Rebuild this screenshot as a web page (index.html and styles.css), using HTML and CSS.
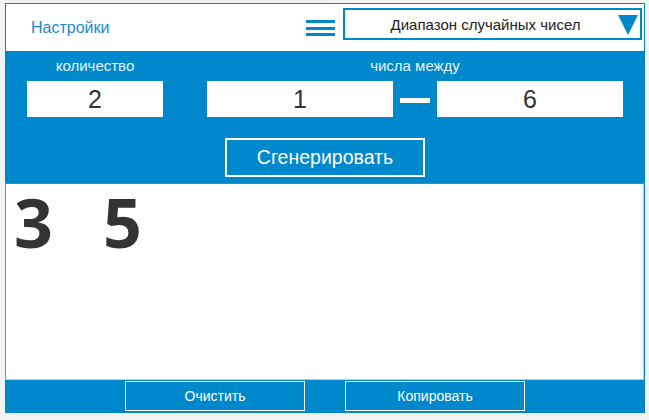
FILE: index.html
```html
<!DOCTYPE html>
<html lang="ru">

<head>
  <meta charset="UTF-8">
  <title>Генератор случайных чисел</title>
  <link rel="stylesheet" href="styles.css">
</head>

<body>
  <div class="app">
    <!-- Header -->
    <header class="top-bar">
      <a class="settings-link" href="#">Настройки</a>
      <button class="menu-button" aria-label="Меню">
        <svg width="29" height="17" viewBox="0 0 29 17">
          <rect x="0" y="0" width="29" height="3" fill="#0088cc" />
          <rect x="0" y="7" width="29" height="3" fill="#0088cc" />
          <rect x="0" y="13" width="29" height="3" fill="#0088cc" />
        </svg>
      </button>
      <div class="mode-select">
        <span class="mode-text">Диапазон случайных чисел</span>
        <svg class="mode-arrow" width="20" height="20" viewBox="0 0 20 20">
          <polygon points="0,0 20,0 10,20" fill="#0088cc" />
        </svg>
      </div>
    </header>

    <!-- Controls -->
    <section class="controls">
      <div class="fields">
        <div class="field count-field">
          <label class="field-label">количество</label>
          <div class="num-box">2</div>
        </div>
        <div class="field range-field">
          <label class="field-label">числа между</label>
          <div class="range-row">
            <div class="num-box">1</div>
            <span class="dash"></span>
            <div class="num-box">6</div>
          </div>
        </div>
      </div>
      <button class="generate-button">Сгенерировать</button>
    </section>

    <!-- Result -->
    <div class="output">
      <span class="result-num">3</span>
      <span class="result-num">5</span>
    </div>

    <!-- Footer -->
    <footer class="bottom-bar">
      <button class="bar-button">Очистить</button>
      <button class="bar-button">Копировать</button>
    </footer>
  </div>
</body>

</html>
```

FILE: styles.css
```css
body {
  margin: 0;
  padding: 3px 0 0 5px;
  background-color: #f3f3f3;
  font-family: "Liberation Sans", Arial, sans-serif;
}

.app {
  width: 640px;
  background-color: #0088cc;
  box-sizing: border-box;
  padding-top: 1px;
}

/* header */
.top-bar {
  display: flex;
  align-items: center;
  height: 47px;
  margin: 0 1px;
  background-color: #fff;
}

.settings-link {
  margin-left: 25px;
  font-size: 16px;
  color: #1a8ad4;
  text-decoration: none;
}

.menu-button {
  margin-left: auto;
  margin-right: 8px;
  padding: 0;
  border: none;
  background: none;
  display: flex;
  margin-top: 2px;
}

.mode-select {
  display: flex;
  align-items: center;
  width: 299px;
  height: 32px;
  margin-right: 2px;
  margin-top: -7px;
  border: 2px solid #0088cc;
  box-sizing: border-box;
}

.mode-text {
  flex: 1;
  text-align: center;
  font-size: 15px;
  color: #222;
  padding-left: 8px;
}

.mode-arrow {
  margin-right: 2px;
  margin-top: 2px;
}

/* controls */
.controls {
  display: flex;
  flex-direction: column;
  align-items: center;
  height: 132px;
  box-sizing: border-box;
  padding-top: 6px;
}

.fields {
  display: flex;
  width: 100%;
  padding-left: 22px;
  box-sizing: border-box;
}

.field {
  display: flex;
  flex-direction: column;
  align-items: center;
}

.count-field {
  width: 136px;
  margin-right: 44px;
}

.field-label {
  font-size: 15px;
  color: #e6f3fa;
  height: 17px;
  margin-bottom: 7px;
}

.num-box {
  width: 136px;
  height: 36px;
  background-color: #fff;
  color: #333;
  font-size: 25px;
  display: flex;
  align-items: center;
  justify-content: center;
}

.range-row {
  display: flex;
  align-items: center;
}

.range-row .num-box {
  width: 186px;
}

.dash {
  width: 30px;
  height: 5px;
  margin: 2px 7px 0;
  background-color: #fff;
}

.generate-button {
  margin-top: 21px;
  width: 200px;
  height: 39px;
  background: none;
  border: 2px solid #fff;
  color: #fff;
  font-family: inherit;
  font-size: 19.5px;
  cursor: pointer;
}

/* result */
.output {
  height: 197px;
  margin-right: 1px;
  background-color: #fff;
  border: 1px solid #8a8a8a;
  border-top-color: #777;
  border-right-color: #c8c8c8;
  border-bottom-color: #c8c8c8;
  box-sizing: border-box;
  padding: 4px 0 0 8px;
  font-family: "Open Sans", sans-serif;
}

.result-num {
  font-size: 68px;
  font-weight: bold;
  color: #333;
  line-height: 1;
  margin-right: 46px;
}

/* footer */
.bottom-bar {
  display: flex;
  justify-content: center;
  gap: 40px;
  height: 33px;
  padding-top: 1px;
  box-sizing: border-box;
}

.bar-button {
  width: 180px;
  height: 30px;
  background: none;
  border: 1px solid #fff;
  color: #fff;
  font-family: inherit;
  font-size: 14px;
  cursor: pointer;
}
```
